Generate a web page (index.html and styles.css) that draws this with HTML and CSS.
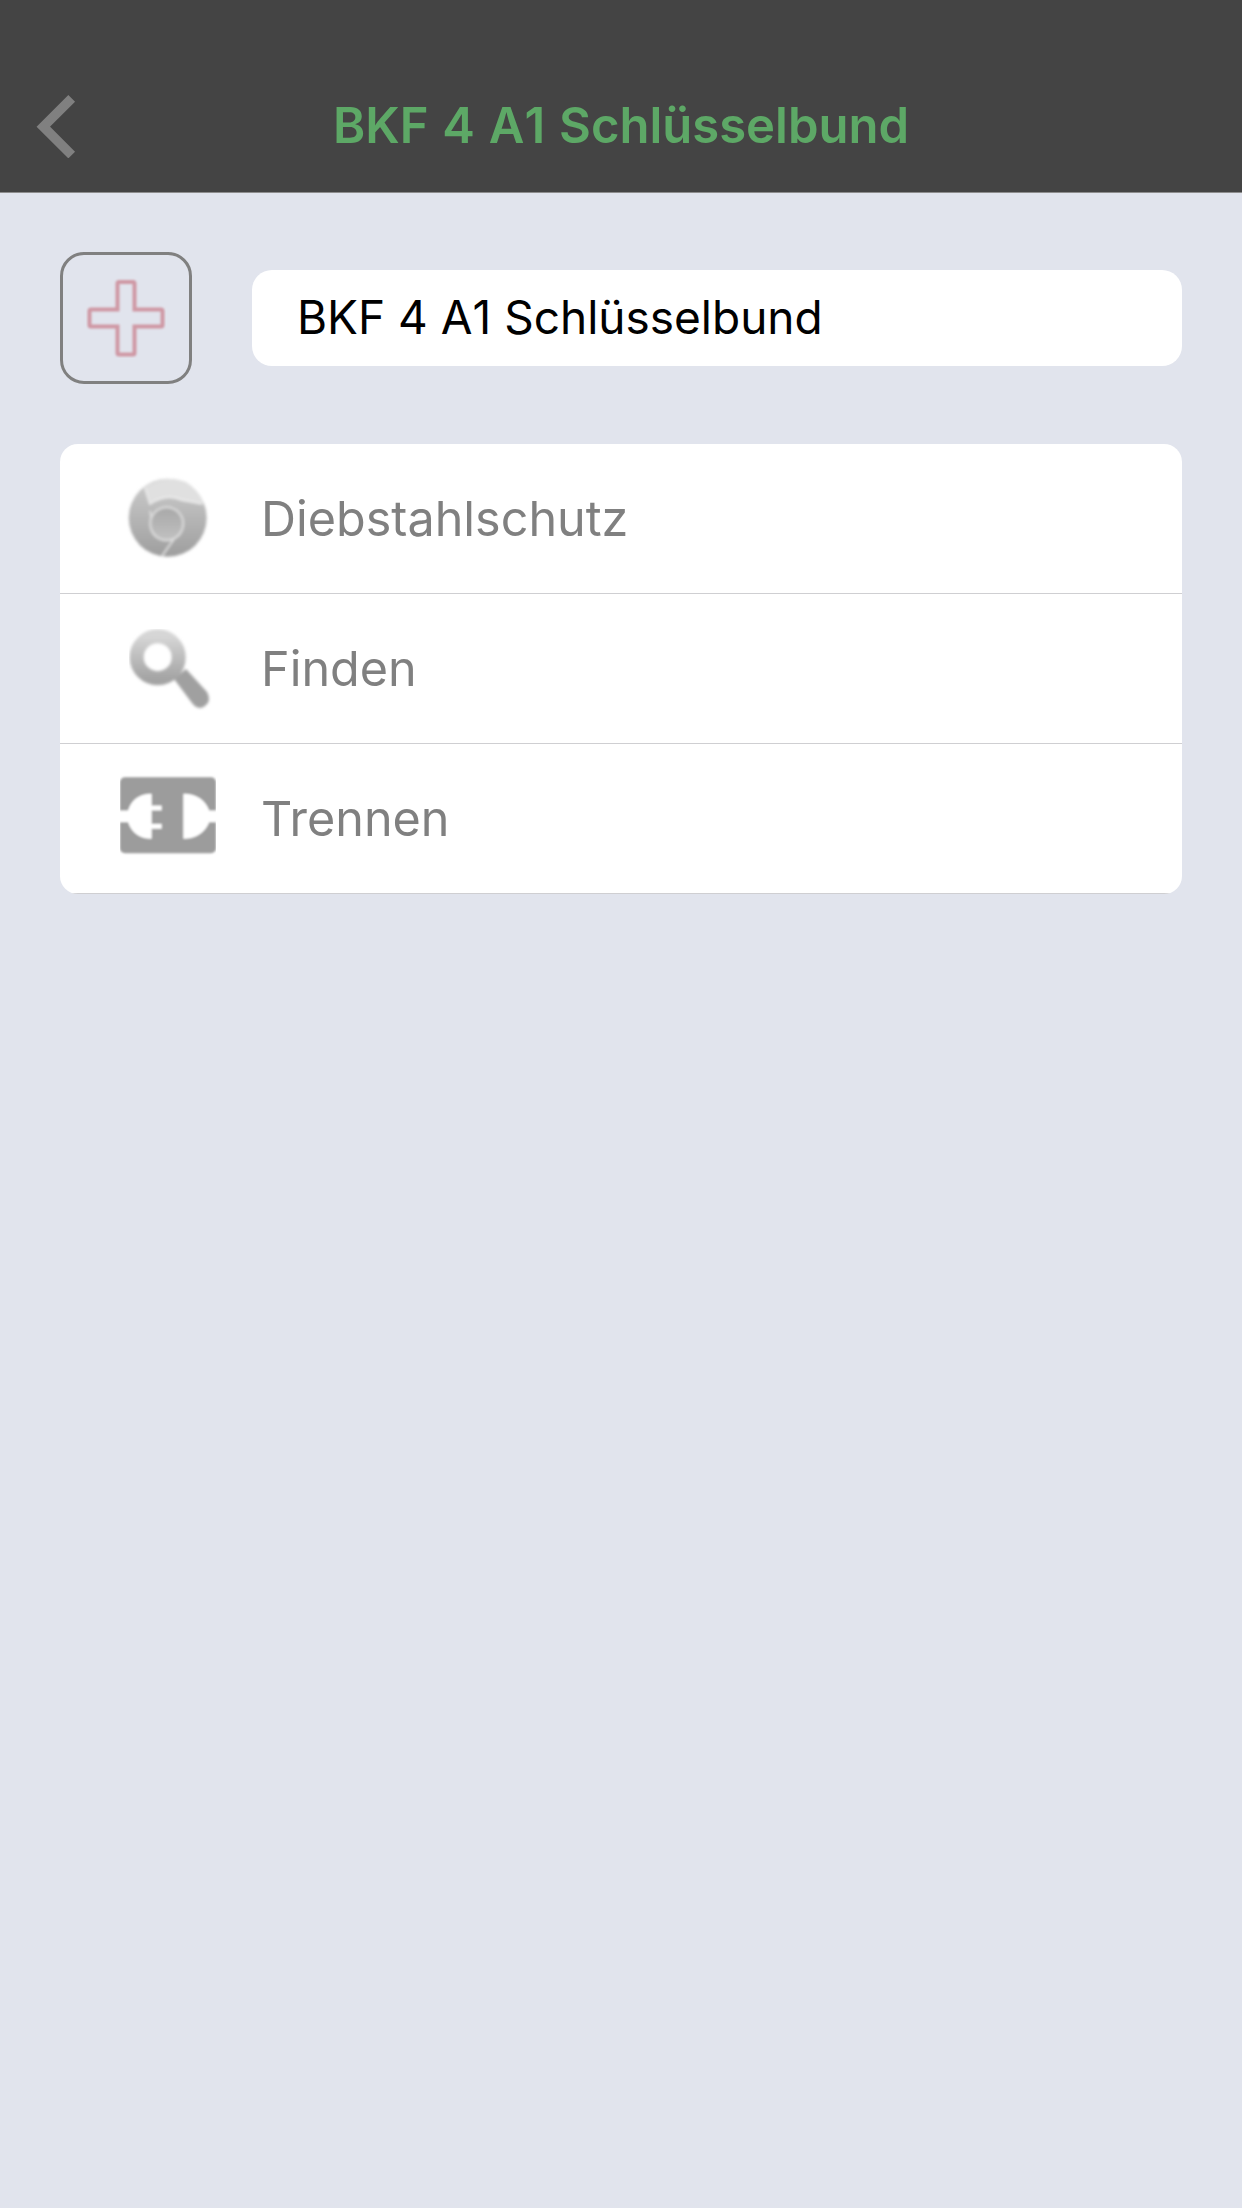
FILE: index.html
```html
<!DOCTYPE html>
<html lang="de">
<head>
<meta charset="utf-8">
<title>BKF 4 A1 Schlüsselbund</title>
<link rel="stylesheet" href="styles.css">
</head>
<body>
<svg class="defs" width="0" height="0" aria-hidden="true">
  <defs>
    <filter id="soft" x="-10%" y="-10%" width="120%" height="120%"><feGaussianBlur stdDeviation="1"/></filter>
    <filter id="softer" x="-10%" y="-10%" width="120%" height="120%"><feGaussianBlur stdDeviation="1.4"/></filter>
    <linearGradient id="metal" x1="0" y1="0" x2="0" y2="1"><stop offset="0" stop-color="#cccccc"/><stop offset="1" stop-color="#9e9e9e"/></linearGradient>
    <linearGradient id="metal2" x1="0" y1="0" x2="0" y2="1"><stop offset="0" stop-color="#d6d6d6"/><stop offset="1" stop-color="#a4a4a4"/></linearGradient>
    <linearGradient id="core" x1="0" y1="0" x2="0" y2="1"><stop offset="0" stop-color="#a8a8a8"/><stop offset="1" stop-color="#c0c0c0"/></linearGradient>
  </defs>
</svg>
<header class="nav">
  <svg class="back" width="42" height="64" viewBox="0 0 42 64"><path d="M35.7 4.3 L7.3 32.7 L35.7 61" fill="none" stroke="#808080" stroke-width="9.5"/></svg>
  <h1 class="title">BKF 4 A1 Schlüsselbund</h1>
</header>
<main class="content">
  <section class="top">
    <div class="iconbox">
      <svg width="80" height="80" viewBox="0 0 80 80"><path filter="url(#soft)" d="M33 4 H47 Q48.500 4 48.500 5.500 V31.500 H75 Q76.500 31.500 76.500 33 V47 Q76.500 48.500 75 48.500 H48.500 V75 Q48.500 76.500 47 76.500 H33 Q31.500 76.500 31.500 75 V48.500 H5 Q3.500 48.500 3.500 47 V33 Q3.500 31.500 5 31.500 H31.500 V5.500 Q31.500 4 33 4 Z" fill="none" stroke="#cf98a4" stroke-width="4"/></svg>
    </div>
    <div class="field">BKF 4 A1 Schlüsselbund</div>
  </section>
  <section class="list">
    <div class="row">
      <span class="ico">
        <svg width="96" height="96" viewBox="0 0 96 96">
          <g filter="url(#softer)">
            <circle cx="47.700" cy="46.800" r="39" fill="url(#metal)"/>
            <path d="M25 16 Q46 3 66 11 Q79 19 84 33 L62 30 Q46 22 31 33 Z" fill="#e0e0e0"/>
            <path d="M25 17 L30 33 Q46 22 62 29 L82 33" fill="none" stroke="#f0f0f0" stroke-width="1.500"/>
            <path d="M30 40 Q33 62 50 69 L54 68 L42 85" fill="none" stroke="#e6e6e6" stroke-width="1.500"/>
            <circle cx="46.700" cy="52.800" r="17.500" fill="#dedede"/>
            <circle cx="46.700" cy="52.800" r="15.500" fill="url(#core)"/>
          </g>
        </svg>
      </span>
      <span class="label">Diebstahlschutz</span>
    </div>
    <div class="row">
      <span class="ico">
        <svg width="96" height="96" viewBox="0 0 96 96">
          <g filter="url(#softer)">
            <path d="M54 58 L66 48 L87 71 Q92 80 85 85 Q78 90 72 82 Z" fill="#a0a0a0"/>
            <circle cx="37.700" cy="36.200" r="21" fill="none" stroke="url(#metal2)" stroke-width="14"/>
          </g>
        </svg>
      </span>
      <span class="label">Finden</span>
    </div>
    <div class="row">
      <span class="ico">
        <svg width="96" height="96" viewBox="0 0 96 96">
          <g filter="url(#soft)">
            <rect x="0" y="6.200" width="96" height="76" rx="5" fill="#9c9c9c"/>
            <path d="M0 39.500 H8 Q13 24 29 22.800 H31.700 V67.800 H29 Q13 66 8 51.200 H0 Z" fill="#fff"/>
            <rect x="31" y="34.500" width="10.700" height="5" fill="#fff"/>
            <rect x="31" y="52.800" width="10.700" height="5" fill="#fff"/>
            <path d="M63.300 22.800 H66 Q83 24 89.300 39.500 H96 V51.200 H89.300 Q83 66 66 67.800 H63.300 Z" fill="#fff"/>
          </g>
        </svg>
      </span>
      <span class="label">Trennen</span>
    </div>
  </section>
</main>
</body>
</html>
```
FILE: styles.css
```css
* { box-sizing: border-box; }
html, body { margin: 0; height: 100%; }
body {
  width: 1242px;
  height: 2208px;
  background: #e1e4ed;
  font-family: Inter, "Liberation Sans", Arial, sans-serif;
  overflow: hidden;
}
.defs { display: block; height: 0; }
.nav {
  position: relative;
  height: 193px;
  background: #444444;
  border-bottom: 1px solid #8d8d8d;
  display: flex;
  align-items: flex-end;
  justify-content: center;
  padding-bottom: 34px;
}
.back { position: absolute; left: 36px; top: 94px; }
.title {
  margin: 0;
  font-size: 49px;
  line-height: 64px;
  font-weight: 600;
  font-kerning: none;
  word-spacing: 1.5px;
  color: #5da866;
}
.content { padding: 59px 60px 0; }
.top { display: flex; align-items: center; gap: 60px; }
.iconbox {
  width: 132px;
  height: 132px;
  flex: none;
  border: 3px solid #808080;
  border-radius: 24px;
  display: flex;
  align-items: center;
  justify-content: center;
}
.field {
  flex: 1;
  height: 96px;
  background: #fff;
  border-radius: 20px;
  padding: 0 0 2px 45px;
  display: flex;
  align-items: center;
  font-size: 46px;
  font-kerning: none;
  color: #000;
}
.list {
  margin-top: 60px;
  background: #fff;
  border-radius: 18px;
  overflow: hidden;
}
.row {
  height: 150px;
  display: flex;
  align-items: center;
  border-bottom: 1px solid #cfcfd2;
  padding-left: 60px;
}
.ico {
  width: 96px;
  flex: none;
  display: flex;
  justify-content: center;
  align-items: center;
}
.label {
  margin-left: 45px;
  font-size: 48.5px;
  color: #808080;
}
```
